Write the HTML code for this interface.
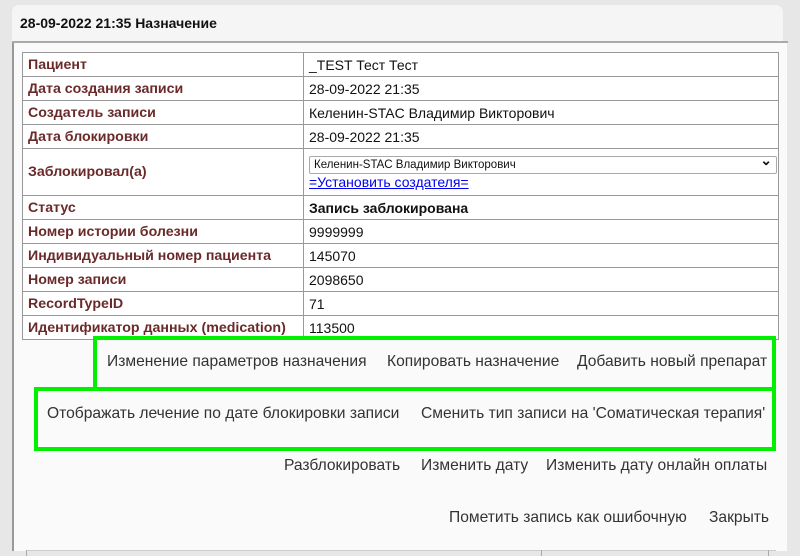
<!DOCTYPE html>
<html><head><meta charset="utf-8"><style>
body{margin:0;width:800px;height:556px;background:#e6e7e6;position:relative;overflow:hidden;font-family:"Liberation Sans",sans-serif}
.hdr{position:absolute;left:12px;top:5px;width:771px;height:36px;background:#f5f5f5;border-radius:7px 7px 0 0;}
.hdr b{position:absolute;left:8px;top:10px;font-size:14px;color:#111}
.line{position:absolute;left:12px;top:41px;width:776px;height:2px;background:#aaa}
.body{position:absolute;left:12px;top:43px;width:775px;height:508px;background:#fafafa;border-left:2px solid #999;box-sizing:border-box}
table{position:absolute;left:22px;top:52px;width:757px;border-collapse:collapse;background:#fff}
td{border:1px solid #999;padding:0 5px;height:23px;font-size:14px;color:#111}
td.l{width:270px;font-weight:bold;font-size:14.2px;color:#6b2a2a;white-space:nowrap}
.sel{border:1px solid #aaa;border-radius:2px;height:16px;font-size:11.5px;line-height:16px;padding-left:4px;position:relative;margin-top:1px;margin-right:-4px}
.sel:after{content:"⌄";position:absolute;right:4px;top:-5px;font-size:14px;font-weight:bold}
a{color:#00e;text-decoration:underline}
.g{position:absolute;border:4px solid #00f000;box-sizing:border-box}
.t{position:absolute;font-size:15.6px;color:#333;white-space:nowrap}
.foot{position:absolute;left:26px;top:550px;width:750px;height:1px;background:#ccc}
.tick{position:absolute;top:550px;width:1px;height:6px;background:#aaa}
</style></head><body>
<div class="hdr"><b>28-09-2022 21:35 Назначение</b></div>
<div class="line"></div>
<div class="body"></div>
<table>
<tr><td class="l" style="height:22px">Пациент</td><td>_TEST Тест Тест</td></tr>
<tr><td class="l">Дата создания записи</td><td>28-09-2022 21:35</td></tr>
<tr><td class="l">Создатель записи</td><td>Келенин-STAC Владимир Викторович</td></tr>
<tr><td class="l">Дата блокировки</td><td>28-09-2022 21:35</td></tr>
<tr><td class="l" style="height:46px">Заблокировал(а)</td><td style="padding-top:0"><div class="sel">Келенин-STAC Владимир Викторович</div><a>=Установить создателя=</a></td></tr>
<tr><td class="l" style="height:22px">Статус</td><td><b>Запись заблокирована</b></td></tr>
<tr><td class="l">Номер истории болезни</td><td>9999999</td></tr>
<tr><td class="l">Индивидуальный номер пациента</td><td>145070</td></tr>
<tr><td class="l">Номер записи</td><td>2098650</td></tr>
<tr><td class="l">RecordTypeID</td><td>71</td></tr>
<tr><td class="l">Идентификатор данных (medication)</td><td>113500</td></tr>
</table>
<div class="g" style="left:93px;top:336px;width:683px;height:55px"></div>
<div class="g" style="left:34px;top:387px;width:742px;height:64px"></div>
<div class="t" style="left:107px;top:353px">Изменение параметров назначения</div>
<div class="t" style="left:387px;top:353px">Копировать назначение</div>
<div class="t" style="left:577px;top:353px">Добавить новый препарат</div>
<div class="t" style="left:47px;top:405px">Отображать лечение по дате блокировки записи</div>
<div class="t" style="left:421px;top:405px">Сменить тип записи на 'Соматическая терапия'</div>
<div class="t" style="left:284px;top:457px">Разблокировать</div>
<div class="t" style="left:421px;top:457px">Изменить дату</div>
<div class="t" style="left:546px;top:457px">Изменить дату онлайн оплаты</div>
<div class="t" style="left:449px;top:509px">Пометить запись как ошибочную</div>
<div class="t" style="left:709px;top:509px">Закрыть</div>
<div class="foot"></div>
<div class="tick" style="left:26px"></div><div class="tick" style="left:541px"></div><div class="tick" style="left:768px"></div>
</body></html>
